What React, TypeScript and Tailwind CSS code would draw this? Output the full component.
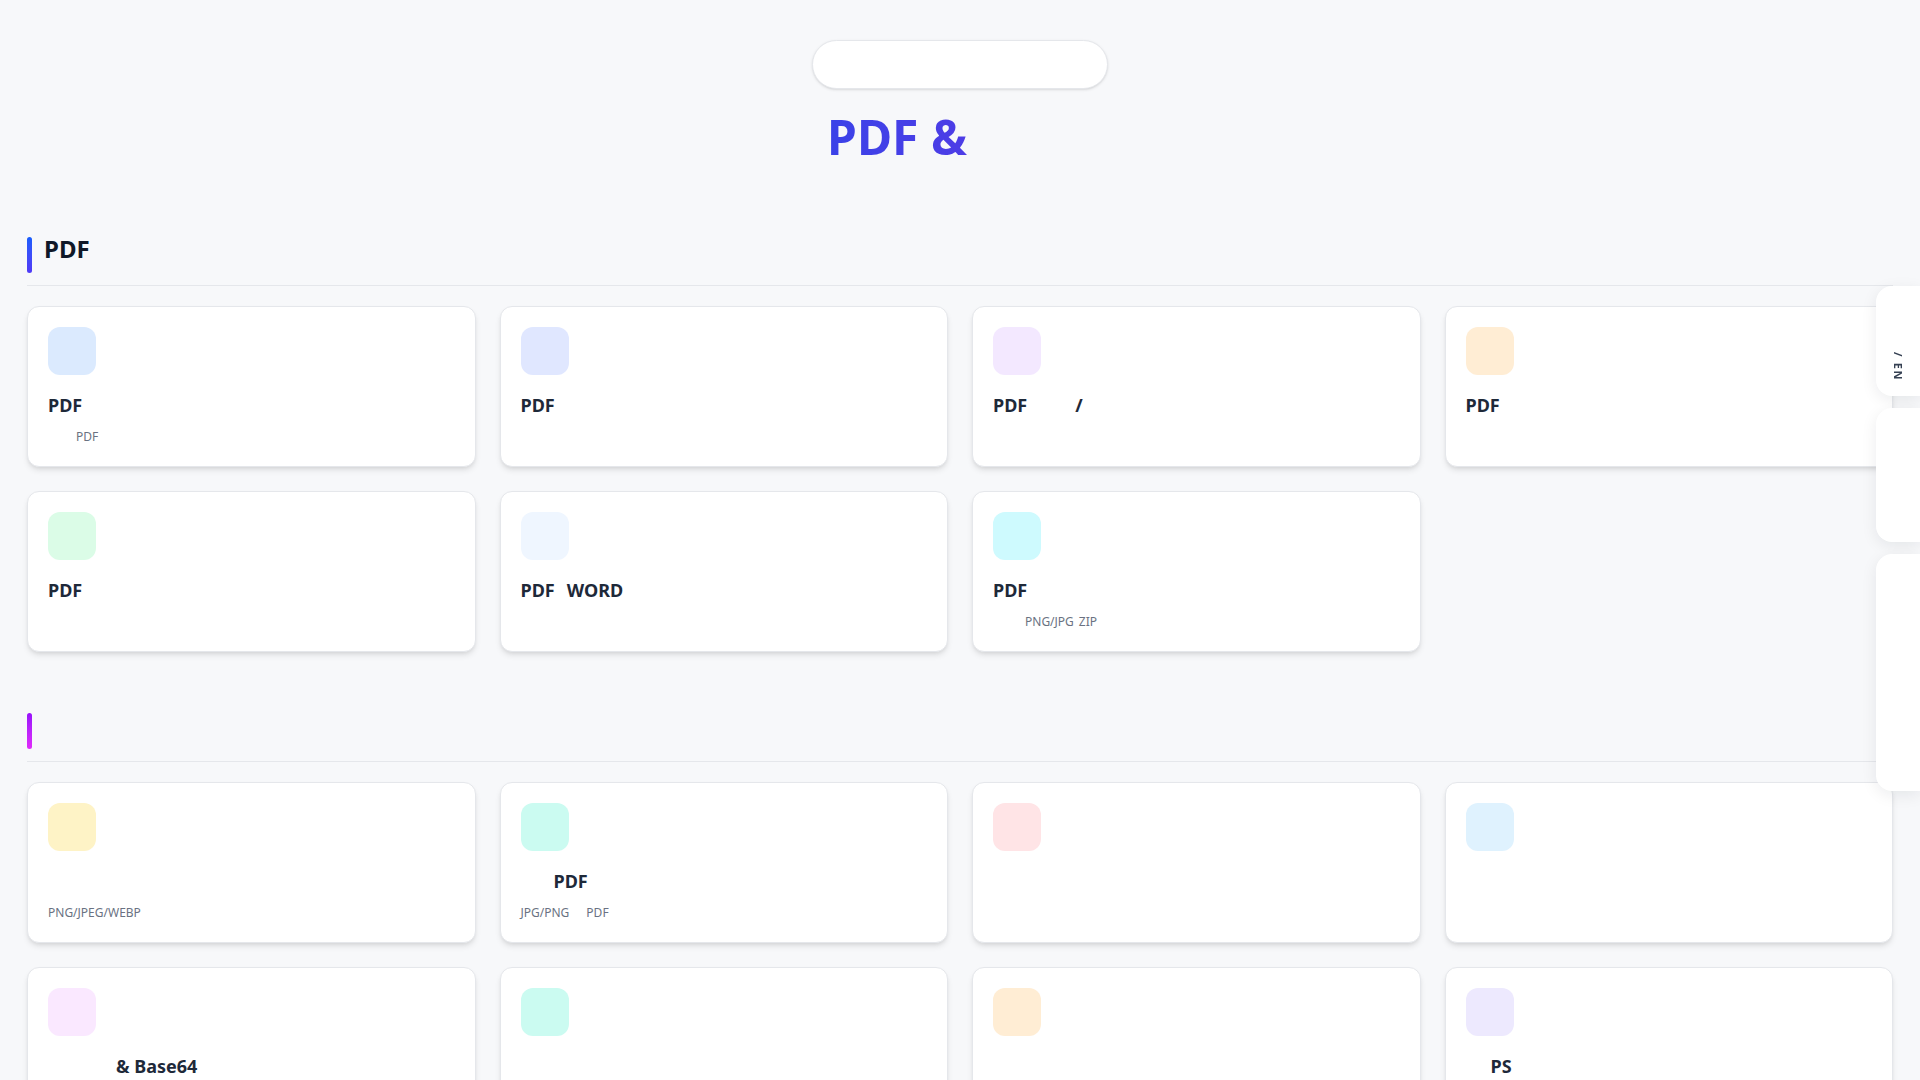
import type { ReactNode } from 'react';

type Tool = {
  tint: string;
  title?: ReactNode;
  desc?: ReactNode;
};

// blank runs stand where the original glyphs did not render
const pdfTools: Tool[] = [
  {
    tint: 'bg-blue-100',
    title: 'PDF',
    desc: (
      <>
        <span className="inline-block w-[28px]" />
        PDF
      </>
    ),
  },
  { tint: 'bg-indigo-100', title: 'PDF' },
  {
    tint: 'bg-purple-100',
    title: (
      <>
        PDF
        <span className="inline-block w-[48px]" />/
      </>
    ),
  },
  { tint: 'bg-orange-100', title: 'PDF' },
  { tint: 'bg-green-100', title: 'PDF' },
  {
    tint: 'bg-blue-50',
    title: (
      <>
        PDF
        <span className="inline-block w-[12px]" />
        WORD
      </>
    ),
  },
  {
    tint: 'bg-cyan-100',
    title: 'PDF',
    desc: (
      <>
        <span className="inline-block w-[32px]" />
        PNG/JPG
        <span className="inline-block w-[5px]" />
        ZIP
      </>
    ),
  },
];

const imageTools: Tool[] = [
  { tint: 'bg-amber-100', desc: 'PNG/JPEG/WEBP' },
  {
    tint: 'bg-teal-100',
    title: (
      <>
        <span className="inline-block w-[33px]" />
        PDF
      </>
    ),
    desc: (
      <>
        JPG/PNG
        <span className="inline-block w-[17px]" />
        PDF
      </>
    ),
  },
  { tint: 'bg-rose-100' },
  { tint: 'bg-sky-100' },
  {
    tint: 'bg-fuchsia-100',
    title: (
      <>
        <span className="inline-block w-[68px]" />& Base64
      </>
    ),
  },
  { tint: 'bg-teal-100' },
  { tint: 'bg-orange-100' },
  {
    tint: 'bg-violet-100',
    title: (
      <>
        <span className="inline-block w-[25px]" />
        PS
      </>
    ),
  },
];

function ToolCard({ tool }: { tool: Tool }) {
  return (
    <div className="flex flex-col rounded-xl border border-gray-200 bg-white p-5 shadow-md">
      <div className={`h-12 w-12 rounded-xl ${tool.tint}`} />
      <div className="mt-4 whitespace-pre text-lg font-bold leading-7 text-gray-800">
        {tool.title ?? '\u00a0'}
      </div>
      <div className="mt-2 whitespace-pre text-xs leading-[19px] text-gray-500">
        {tool.desc ?? '\u00a0'}
      </div>
    </div>
  );
}

function SectionHead({ bar, children }: { bar: string; children?: ReactNode }) {
  return (
    <div className="flex items-start gap-3 border-b border-gray-200 pb-3">
      <span className={`mt-1 h-9 w-[5px] rounded-full ${bar}`} />
      <h2 className="text-2xl font-bold leading-8 text-gray-900">
        {children ?? '\u00a0'}
      </h2>
    </div>
  );
}

function Section({
  bar,
  label,
  tools,
  className = '',
}: {
  bar: string;
  label?: ReactNode;
  tools: Tool[];
  className?: string;
}) {
  return (
    <section className={className}>
      <SectionHead bar={bar}>{label}</SectionHead>
      <div className="mt-5 grid grid-cols-4 gap-6">
        {tools.map((t, i) => (
          <ToolCard key={i} tool={t} />
        ))}
      </div>
    </section>
  );
}

function SideRail() {
  return (
    <div className="fixed right-0 top-[286px] z-20 flex flex-col gap-3">
      <div className="flex h-[110px] w-11 items-end justify-center rounded-l-2xl bg-white pb-[15px] shadow-[0_4px_16px_rgba(15,23,42,0.08)]">
        <span className="text-[11px] font-bold tracking-[0.15em] text-gray-700 [writing-mode:vertical-rl]">
          / EN
        </span>
      </div>
      <div className="h-[134px] w-11 rounded-l-2xl bg-white shadow-[0_4px_16px_rgba(15,23,42,0.08)]" />
      <div className="h-[237px] w-11 rounded-l-2xl bg-white shadow-[0_4px_16px_rgba(15,23,42,0.08)]" />
    </div>
  );
}

export default function App() {
  return (
    <div className="min-h-screen w-full bg-[#f7f8fa] font-['Noto_Sans',sans-serif]">
      <div className="px-[27px] pb-16 pt-10">
        <header className="flex flex-col items-center">
          <div className="h-[49px] w-[296px] rounded-full border border-gray-200 bg-white shadow-sm" />
          <h1 className="mt-6 whitespace-pre bg-linear-to-r from-[#3a42e8] via-[#4c3de6] to-[#7c3aed] bg-clip-text text-5xl font-bold leading-none text-transparent">
            PDF &amp;
            <span className="inline-block w-[126px]" />
          </h1>
        </header>

        <Section
          className="mt-[72px]"
          bar="bg-linear-to-b from-blue-600 to-indigo-600"
          label="PDF"
          tools={pdfTools}
        />

        <Section
          className="mt-[57px]"
          bar="bg-linear-to-b from-purple-600 to-fuchsia-500"
          tools={imageTools}
        />
      </div>

      <SideRail />
    </div>
  );
}
